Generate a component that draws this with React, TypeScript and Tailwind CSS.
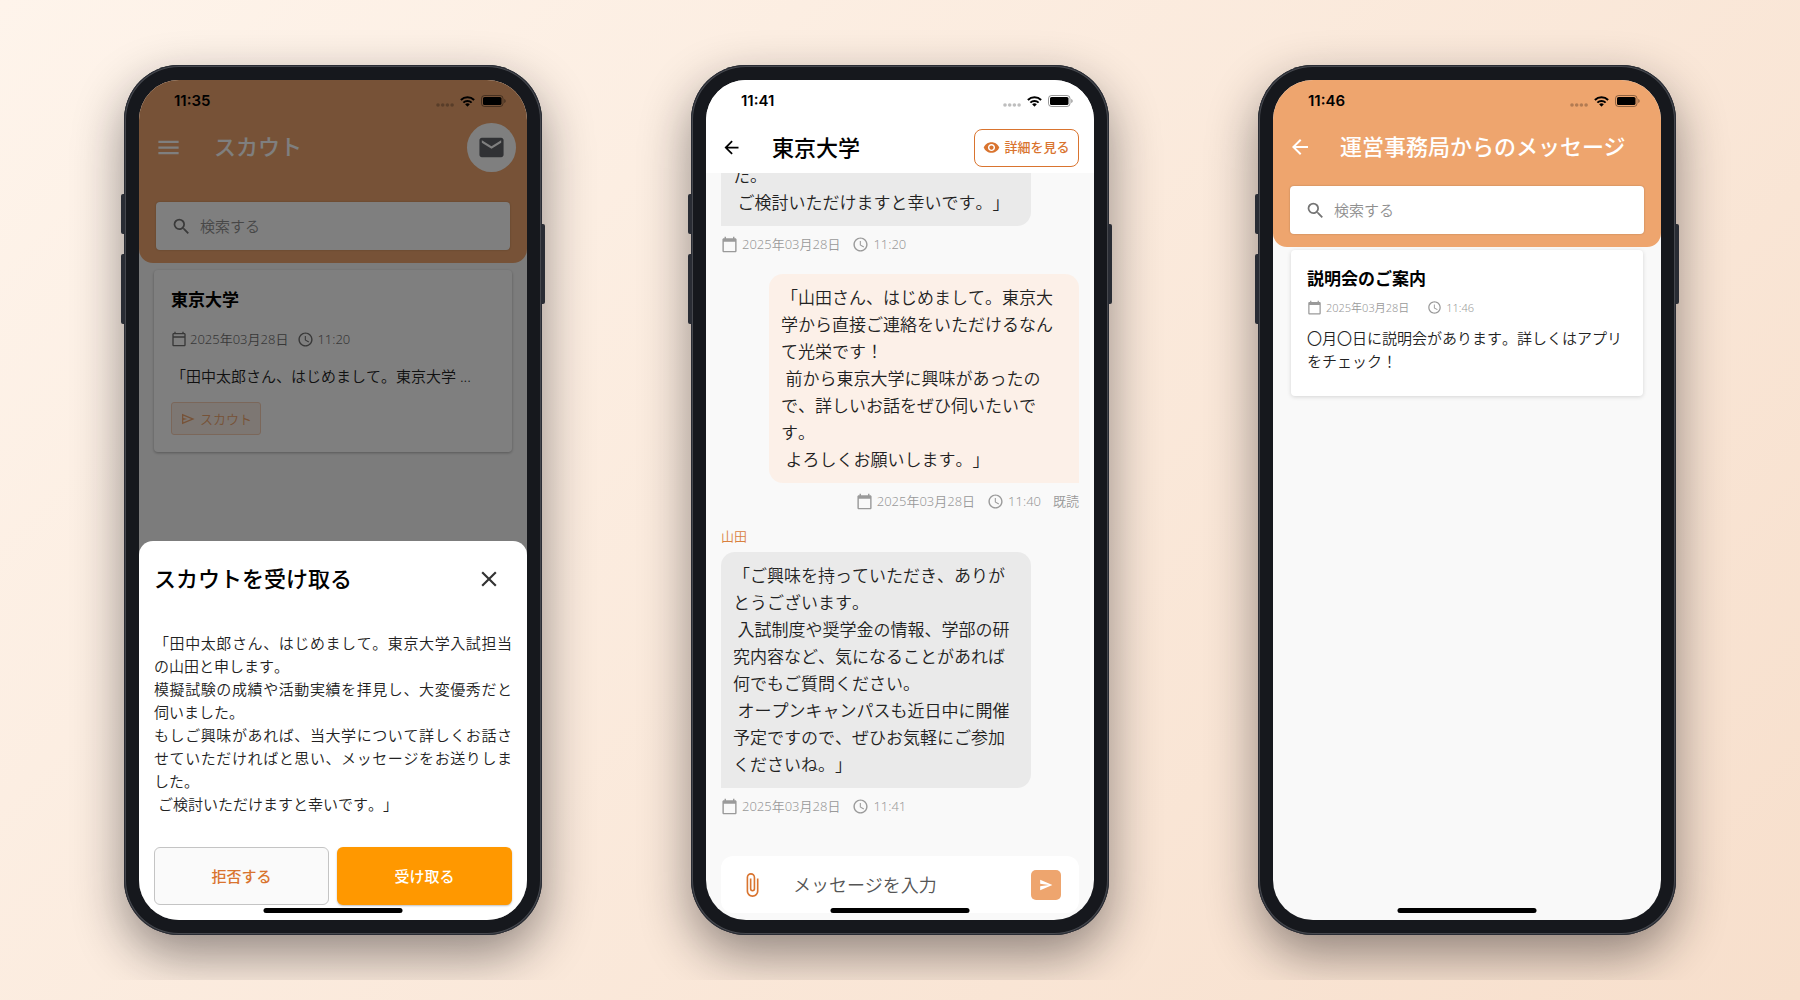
import React from 'react';
import {
  MdAccessTime,
  MdArrowBack,
  MdAttachFile,
  MdCalendarToday,
  MdClose,
  MdEmail,
  MdMenu,
  MdOutlineCalendarToday,
  MdSearch,
  MdSend,
  MdVisibility,
} from 'react-icons/md';

const SCOUT_MESSAGE =
  '「田中太郎さん、はじめまして。東京大学入試担当の山田と申します。\n模擬試験の成績や活動実績を拝見し、大変優秀だと伺いました。\nもしご興味があれば、当大学について詳しくお話させていただければと思い、メッセージをお送りしました。\n ご検討いただけますと幸いです。」';

type Message = {
  id: number;
  mine?: boolean;
  sender?: string;
  body: string;
  time: string;
};

const MESSAGES: Message[] = [
  { id: 1, body: 'た。\n ご検討いただけますと幸いです。」', time: '11:20' },
  {
    id: 2,
    mine: true,
    body: '「山田さん、はじめまして。東京大学から直接ご連絡をいただけるなんて光栄です！\n 前から東京大学に興味があったので、詳しいお話をぜひ伺いたいです。\n よろしくお願いします。」',
    time: '11:40',
  },
  {
    id: 3,
    sender: '山田',
    body: '「ご興味を持っていただき、ありがとうございます。\n 入試制度や奨学金の情報、学部の研究内容など、気になることがあれば何でもご質問ください。\n オープンキャンパスも近日中に開催予定ですので、ぜひお気軽にご参加くださいね。」',
    time: '11:41',
  },
];

function StatusBar({ time }: { time: string }) {
  return (
    <div className="flex h-[42px] shrink-0 items-center justify-between pl-[35px] pr-[21px] text-black">
      <span className="font-['Inter'] text-[15px] font-semibold leading-5">{time}</span>
      <div className="flex items-center gap-[6px]">
        <svg width="18" height="12" viewBox="0 0 18 12" className="opacity-25" aria-hidden="true">
          <circle cx="2" cy="10" r="1.8" />
          <circle cx="6.7" cy="10" r="1.8" />
          <circle cx="11.4" cy="10" r="1.8" />
          <circle cx="16.1" cy="10" r="1.8" />
        </svg>
        <svg width="15" height="11" viewBox="0 0 17 12" aria-hidden="true">
          <path d="M1 4.2a10.8 10.8 0 0 1 15 0" fill="none" stroke="#000" strokeWidth="2.3" />
          <path d="M3.8 7.3a6.8 6.8 0 0 1 9.4 0" fill="none" stroke="#000" strokeWidth="2.2" />
          <path d="M10.9 9.4c.2-.2.2-.4 0-.5-1.400-1.200-3.400-1.200-4.800 0-.2.1-.2.3 0 .5l2.1 2.2c.2.1.4.1.5 0z" />
        </svg>
        <svg width="25" height="12" viewBox="0 0 25 12" aria-hidden="true">
          <rect x="0.5" y="0.5" width="21.5" height="11" rx="3" fill="none" stroke="#000" opacity="0.4" />
          <rect x="2" y="2" width="18.5" height="8" rx="1.6" />
          <path d="M23.3 4v4c.8-.3 1.3-1.1 1.3-2s-.5-1.7-1.3-2z" opacity="0.45" />
        </svg>
      </div>
    </div>
  );
}

function Phone({ children }: { children: React.ReactNode }) {
  return (
    <section className="relative h-[870px] w-[418px] shrink-0 rounded-[55px] bg-[#16181d] p-[15px] shadow-[inset_0_0_0_1px_#292c34,inset_0_0_0_2px_#46484e,0_20px_50px_rgba(20,15,20,0.45)]">
      {/* hardware keys */}
      <span className="absolute -left-[3px] top-[129px] h-10 w-[3px] rounded-l-[2px] bg-[#292c34]" />
      <span className="absolute -left-[3px] top-[189px] h-[70px] w-[3px] rounded-l-[2px] bg-[#292c34]" />
      <span className="absolute -right-[3px] top-[159px] h-20 w-[3px] rounded-r-[2px] bg-[#292c34]" />
      <div className="relative flex h-full flex-col overflow-hidden rounded-[40px] bg-[#f9f9f9]">
        {children}
        <span className="absolute bottom-[7px] left-1/2 h-[5px] w-[139px] -translate-x-1/2 rounded-full bg-black" />
      </div>
    </section>
  );
}

function SearchBox({ id }: { id: string }) {
  return (
    <label
      htmlFor={id}
      className="mx-[17px] mb-3 flex h-12 items-center gap-2 rounded bg-white pl-[15px] shadow-[0_0_2px_rgba(0,0,0,0.25)]"
    >
      <MdSearch className="size-[21px] shrink-0 text-[#757575]" />
      <input
        id={id}
        type="search"
        placeholder="検索する"
        aria-label="検索する"
        className="w-full bg-transparent text-[15px] font-[350] leading-6 outline-none placeholder:text-[#8e8e8e]"
      />
    </label>
  );
}

function ScoutIcon() {
  return (
    <svg viewBox="0 0 24 24" className="size-4" fill="currentColor" aria-hidden="true">
      <path d="M3 20V4l19 8-19 8zm2-3 11.85-5L5 7v3.5l6 1.5-6 1.5V17z" />
    </svg>
  );
}

function ScoutScreen() {
  return (
    <Phone>
      <header className="rounded-b-[14px] bg-[#eea56e]">
        <StatusBar time="11:35" />
        <div className="flex h-[50px] items-center pl-4 pr-[11px]">
          <button type="button" aria-label="メニュー" className="text-white">
            <MdMenu className="size-[27px]" />
          </button>
          <h1 className="ml-8 flex-1 pb-0.5 text-[22px] font-medium leading-8 text-white">スカウト</h1>
          <button
            type="button"
            aria-label="メール"
            className="flex size-[49px] items-center justify-center rounded-full bg-white text-[#616369]"
          >
            <MdEmail className="size-[29px]" />
          </button>
        </div>
        <div className="pt-[30px] pb-px">
          <SearchBox id="scout-search" />
        </div>
      </header>

      <article className="mx-[15px] mt-[7px] rounded bg-white p-[17px] shadow-[0_1px_3px_rgba(0,0,0,0.3)]">
        <h2 className="text-[17px] font-bold leading-[26px] text-black">東京大学</h2>
        <div className="mt-[17px] flex h-[18px] items-center gap-[9px] text-[13px] leading-[18px] text-[#707070]">
          <span className="flex items-center gap-[3px]">
            <MdOutlineCalendarToday className="size-4" />
            2025年03月28日
          </span>
          <span className="flex items-center gap-[3px]">
            <MdAccessTime className="size-[17px]" />
            11:20
          </span>
        </div>
        <p className="mt-[17px] text-[15px] leading-[23px] text-[#222] [font-kerning:none]">
          「田中太郎さん、はじめまして。東京大学 ...
        </p>
        <span className="mt-[14px] inline-flex h-[33px] items-center gap-1 rounded-[3px] border border-[#f6cfb4] bg-[#fbefe7] px-2 text-[13px] leading-[18px] text-[#eea56e]">
          <ScoutIcon />
          スカウト
        </span>
      </article>

      {/* backdrop + bottom sheet */}
      <div className="absolute inset-0 flex flex-col justify-end bg-black/50">
        <div role="dialog" aria-labelledby="sheet-title" className="rounded-t-[14px] bg-white px-[15px] pb-[15px]">
          <div className="flex items-center justify-between pt-[21px] pr-[10px]">
            <h2 id="sheet-title" className="pb-0.5 text-[22px] font-medium leading-8 text-black">
              スカウトを受け取る
            </h2>
            <button type="button" aria-label="閉じる" className="text-[#333]">
              <MdClose className="size-[26px]" />
            </button>
          </div>
          <p className="mt-9 whitespace-pre-wrap text-justify text-[15px] leading-[23px] text-[#222] [font-kerning:none]">
            {SCOUT_MESSAGE}
          </p>
          <div className="mt-[31px] grid h-[58px] grid-cols-2 gap-2 text-[15px] font-medium">
            <button type="button" className="rounded-md border border-[#c4c4c4] bg-[#fafafa] text-[#d9742f]">
              拒否する
            </button>
            <button
              type="button"
              className="rounded-md bg-[#ff9800] text-white shadow-[0_1px_2px_rgba(0,0,0,0.25)]"
            >
              受け取る
            </button>
          </div>
        </div>
      </div>
    </Phone>
  );
}

function MessageMeta({ message }: { message: Message }) {
  return (
    <div className="mt-[9px] flex h-[19px] items-center gap-3 text-[13px] leading-[19px] text-[#9a9a9a]">
      <span className="flex items-center gap-1">
        <MdCalendarToday className="size-[17px]" />
        2025年03月28日
      </span>
      <span className="flex items-center gap-1">
        <MdAccessTime className="size-[17px]" />
        {message.time}
      </span>
      {message.mine && <span>既読</span>}
    </div>
  );
}

function ChatScreen() {
  return (
    <Phone>
      <header className="shrink-0 bg-white">
        <StatusBar time="11:41" />
        <div className="flex h-[51px] items-center px-[15px]">
          <button type="button" aria-label="戻る" className="text-black">
            <MdArrowBack className="size-[21px]" />
          </button>
          <h1 className="ml-[30px] flex-1 pb-0.5 text-[22px] font-medium leading-8 text-black">東京大学</h1>
          <button
            type="button"
            className="flex h-[38px] w-[105px] items-center justify-center gap-1 rounded-lg border border-[#d9742f] bg-white text-[13px] font-medium text-[#d9742f]"
          >
            <MdVisibility className="size-[17px]" />
            詳細を見る
          </button>
        </div>
      </header>

      <div className="flex min-h-0 flex-1 flex-col justify-end overflow-hidden px-[15px] pb-10">
        {MESSAGES.map((message) =>
          message.mine ? (
            <div key={message.id} className="mt-5 flex shrink-0 flex-col items-end">
              <p className="w-[310px] whitespace-pre-wrap rounded-[14px] rounded-br-none bg-[#fcf0e8] py-[10px] pl-3 pr-5 text-[17px] leading-[27px] text-[#222] [font-kerning:none]">
                {message.body}
              </p>
              <MessageMeta message={message} />
            </div>
          ) : (
            <div key={message.id} className="mt-4 flex shrink-0 flex-col items-start">
              {message.sender && (
                <span className="mb-[6px] text-[13px] leading-[19px] text-[#d9813f]">{message.sender}</span>
              )}
              <p className="w-[310px] whitespace-pre-wrap rounded-[14px] rounded-bl-none bg-[#eaeaea] py-[10px] pl-3 pr-5 text-[17px] leading-[27px] text-[#222] [font-kerning:none]">
                {message.body}
              </p>
              <MessageMeta message={message} />
            </div>
          ),
        )}
      </div>

      <form className="mx-[15px] mb-[7px] flex h-[57px] shrink-0 items-center rounded-xl bg-white pl-[18px] pr-[18px]">
        <button type="button" aria-label="ファイルを添付" className="text-[#d9742f]">
          <MdAttachFile className="size-[26px]" />
        </button>
        <input
          type="text"
          placeholder="メッセージを入力"
          aria-label="メッセージを入力"
          className="ml-7 min-w-0 flex-1 bg-transparent text-[18px] font-[350] leading-7 outline-none placeholder:text-[#555]"
        />
        <button
          type="button"
          aria-label="送信"
          className="flex size-[30px] items-center justify-center rounded-[5px] bg-[#eea56e] text-white"
        >
          <MdSend className="size-[14px]" />
        </button>
      </form>
    </Phone>
  );
}

function NoticeScreen() {
  return (
    <Phone>
      <header className="rounded-b-[14px] bg-[#eea56e]">
        <StatusBar time="11:46" />
        <div className="flex h-[50px] items-center pl-[15px]">
          <button type="button" aria-label="戻る" className="text-white">
            <MdArrowBack className="size-6" />
          </button>
          <h1 className="ml-7 whitespace-nowrap pb-0.5 text-[22px] font-medium leading-8 text-white">
            運営事務局からのメッセージ
          </h1>
        </div>
        <div className="pt-[14px] pb-px">
          <SearchBox id="notice-search" />
        </div>
      </header>

      <article className="mx-[18px] mt-[3px] rounded bg-white px-4 pt-4 pb-[23px] shadow-[0_1px_4px_rgba(0,0,0,0.15)]">
        <h2 className="text-[17px] font-bold leading-[26px] text-black">説明会のご案内</h2>
        <div className="mt-[7px] flex h-[17px] items-center gap-[18px] text-[11px] leading-[17px] text-[#9a9a9a]">
          <span className="flex items-center gap-1">
            <MdCalendarToday className="size-[15px]" />
            2025年03月28日
          </span>
          <span className="flex items-center gap-1">
            <MdAccessTime className="size-[15px]" />
            11:46
          </span>
        </div>
        <p className="mt-[11px] text-[15px] leading-[23px] text-[#222] [font-kerning:none]">
          〇月〇日に説明会があります。詳しくはアプリをチェック！
        </p>
      </article>
    </Phone>
  );
}

export default function App() {
  return (
    <main
      lang="ja"
      className="min-h-screen bg-linear-135 from-[#fef4eb] to-[#f7dfcc] py-5 font-['Noto_Sans','Noto_Sans_CJK_JP',sans-serif] font-[350] [text-spacing-trim:space-all]"
    >
      <div className="flex min-h-[960px] flex-wrap items-center justify-center gap-[149px] overflow-hidden">
        <ScoutScreen />
        <ChatScreen />
        <NoticeScreen />
      </div>
    </main>
  );
}
